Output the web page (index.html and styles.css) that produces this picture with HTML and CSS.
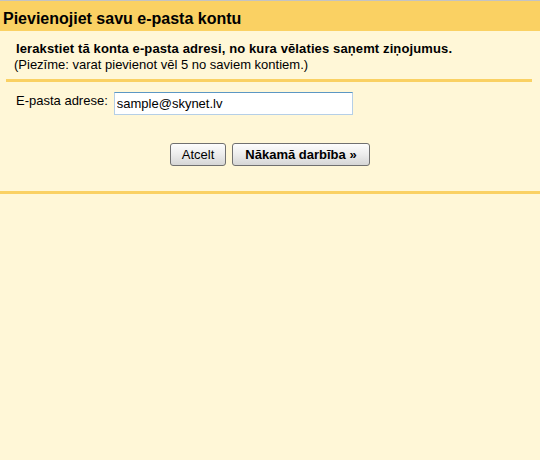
FILE: index.html
```html
<!DOCTYPE html>
<html lang="lv">
<head>
<meta charset="utf-8">
<title>Pievienojiet savu e-pasta kontu</title>
<link rel="stylesheet" href="styles.css">
</head>
<body>
<div class="page">
  <div class="topline"></div>
  <h1 class="header">Pievienojiet savu e-pasta kontu</h1>
  <div class="intro">
    <p class="intro-main">Ierakstiet tā konta e-pasta adresi, no kura vēlaties saņemt ziņojumus.</p>
    <p class="intro-note">(Piezīme: varat pievienot vēl 5 no saviem kontiem.)</p>
  </div>
  <div class="form">
    <div class="field">
      <label class="field-label" for="email">E-pasta adrese:</label>
      <input class="field-input" id="email" type="text" value="sample@skynet.lv">
    </div>
    <div class="actions">
      <button class="btn btn-cancel" type="button">Atcelt</button>
      <button class="btn btn-primary" type="button">Nākamā darbība »</button>
    </div>
  </div>
  <div class="bottomline"></div>
</div>
</body>
</html>
```

FILE: styles.css
```css
html, body {
  margin: 0;
  padding: 0;
  background: #fff7d7;
}
body {
  font-family: "Liberation Sans", Arial, sans-serif;
  font-size: 13px;
  color: #000;
}
.page {
  display: flex;
  flex-direction: column;
}
.topline {
  height: 1px;
  background: #c3c3c3;
}
.header {
  margin: 0;
  height: 21px;
  padding: 9px 0 0 3px;
  background: #fad163;
  font-size: 16px;
  font-weight: bold;
  line-height: 18px;
}
.intro {
  margin: 0 8px 0 6px;
  padding: 10px 0 6px 0;
  border-bottom: 3px solid #fad163;
}
.intro p {
  margin: 0;
  line-height: 16px;
}
.intro-main {
  font-weight: bold;
  padding-left: 10px;
  letter-spacing: 0.12px;
}
.intro-note {
  padding-left: 8px;
}
.form {
  padding: 10px 0 25px 0;
  display: flex;
  flex-direction: column;
  gap: 28px;
}
.field {
  display: flex;
  align-items: flex-start;
  gap: 6px;
  padding-left: 16px;
}
.field-label {
  flex: 0 0 90px;
  white-space: nowrap;
  line-height: 16px;
  padding-top: 1px;
}
.field-input {
  box-sizing: border-box;
  width: 239px;
  height: 23px;
  margin: 0;
  padding: 0 2px;
  border: 1px solid #b5cfe7;
  border-top-color: #5b97c4;
  background: #fff;
  font-family: "Liberation Sans", Arial, sans-serif;
  font-size: 13px;
  color: #000;
  outline: none;
}
.actions {
  display: flex;
  justify-content: center;
  gap: 6px;
}
.btn {
  box-sizing: border-box;
  height: 23px;
  margin: 0;
  padding: 0;
  border: 1px solid #707070;
  border-radius: 3px;
  background: linear-gradient(#fdfdfd, #ececec 50%, #d6d6d6);
  font-family: "Liberation Sans", Arial, sans-serif;
  font-size: 13px;
  color: #000;
  line-height: 21px;
  text-align: center;
}
.btn-cancel {
  width: 56px;
}
.btn-primary {
  width: 138px;
  font-weight: bold;
}
.bottomline {
  height: 3px;
  background: #fad163;
}
```
